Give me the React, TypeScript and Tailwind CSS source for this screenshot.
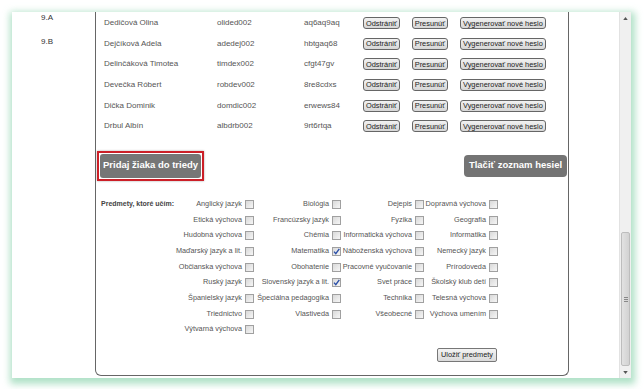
import React from 'react';

type Student = {
  name: string;
  login: string;
  password: string;
};

const students: Student[] = [
  { name: 'Dedičová Olina', login: 'olided002', password: 'aq6aq9aq' },
  { name: 'Dejčíková Adela', login: 'adedej002', password: 'hbtgaq68' },
  { name: 'Delinčáková Timotea', login: 'timdex002', password: 'cfgt47gv' },
  { name: 'Devečka Róbert', login: 'robdev002', password: '8re8cdxs' },
  { name: 'Dička Dominik', login: 'domdic002', password: 'erwews84' },
  { name: 'Drbul Albín', login: 'albdrb002', password: '9rt6rtqa' },
];

// subjects laid out column by column, as in the original form
const subjectColumns: [string, boolean][][] = [
  [
    ['Anglický jazyk', false],
    ['Etická výchova', false],
    ['Hudobná výchova', false],
    ['Maďarský jazyk a lit.', false],
    ['Občianska výchova', false],
    ['Ruský jazyk', false],
    ['Španielsky jazyk', false],
    ['Triednictvo', false],
    ['Výtvarná výchova', false],
  ],
  [
    ['Biológia', false],
    ['Francúzsky jazyk', false],
    ['Chémia', false],
    ['Matematika', true],
    ['Obohatenie', false],
    ['Slovenský jazyk a lit.', true],
    ['Špeciálna pedagogika', false],
    ['Vlastiveda', false],
  ],
  [
    ['Dejepis', false],
    ['Fyzika', false],
    ['Informatická výchova', false],
    ['Náboženská výchova', false],
    ['Pracovné vyučovanie', false],
    ['Svet práce', false],
    ['Technika', false],
    ['Všeobecné', false],
  ],
  [
    ['Dopravná výchova', false],
    ['Geografia', false],
    ['Informatika', false],
    ['Nemecký jazyk', false],
    ['Prírodoveda', false],
    ['Školský klub detí', false],
    ['Telesná výchova', false],
    ['Výchova umením', false],
  ],
];

function SmallButton({ children }: { children: React.ReactNode }) {
  return (
    <span className="inline-flex items-center h-[12px] px-[2px] border border-[#666] rounded-[3px] bg-gradient-to-b from-[#f2f2f2] to-[#d6d6d6] text-[7.4px] leading-none text-[#222] whitespace-nowrap">
      {children}
    </span>
  );
}

function Box({ checked }: { checked: boolean }) {
  return (
    <span className="relative inline-block w-[9px] h-[9px] shrink-0 border border-[#a0a0a0] bg-gradient-to-br from-[#d9d9d9] to-[#f6f6f6]">
      {checked && (
        <svg viewBox="0 0 9 9" className="absolute -left-px -top-px w-[9px] h-[9px]">
          <path d="M2 4.6 L3.8 6.6 L7.3 1.8" fill="none" stroke="#2a4fa8" strokeWidth="1.4" />
        </svg>
      )}
    </span>
  );
}

function Scrollbar() {
  return (
    <div className="w-[12px] shrink-0 flex flex-col bg-[#f0f0f0] border-l border-[#e2e2e2]">
      <div className="h-[12px] flex items-center justify-center">
        <svg viewBox="0 0 6 4" className="w-[5px] h-[3px]">
          <path d="M0 4 L3 0 L6 4 Z" fill="#555" />
        </svg>
      </div>
      <div className="flex-1" />
      <div className="h-[134px] mx-[1px] flex items-center justify-center rounded-[2px] border border-[#bdbdbd] bg-gradient-to-r from-[#e2e2e2] to-[#d2d2d2]">
        <div className="flex flex-col gap-[1px]">
          <span className="block w-[4px] h-px bg-[#888]" />
          <span className="block w-[4px] h-px bg-[#888]" />
          <span className="block w-[4px] h-px bg-[#888]" />
        </div>
      </div>
      <div className="h-[12px] flex items-center justify-center">
        <svg viewBox="0 0 6 4" className="w-[5px] h-[3px]">
          <path d="M0 0 L6 0 L3 4 Z" fill="#555" />
        </svg>
      </div>
    </div>
  );
}

export default function App() {
  return (
    <div className="w-[644px] h-[389px] bg-white overflow-hidden pt-[12px] pl-[12px] font-['Liberation_Sans',Arial,sans-serif]">
      <div className="w-[619px] h-[366px] flex overflow-hidden bg-white shadow-[1px_3px_7px_3px_rgba(150,215,180,0.75)]">
        <div className="flex-1 flex">
          {/* class list */}
          <div className="w-[83px] shrink-0 pl-[29px] text-[8px] leading-[10px] text-[#333]">
            <div className="mt-px">9.A</div>
            <div className="mt-[14px]">9.B</div>
          </div>

          {/* class detail panel */}
          <div className="w-[474px] h-[364px] shrink-0 border-l border-r border-b border-[#666] rounded-b-[6px] text-[#555]">
            <div className="pt-[1px] pl-[8px]">
              {students.map((s) => (
                <div key={s.login} className="h-[20.6px] grid grid-cols-[113px_87px_59px_auto] items-center text-[8px] whitespace-nowrap">
                  <span>{s.name}</span>
                  <span>{s.login}</span>
                  <span>{s.password}</span>
                  <div className="flex gap-[12px]">
                    <SmallButton>Odstrániť</SmallButton>
                    <SmallButton>Presunúť</SmallButton>
                    <SmallButton>Vygenerovať nové heslo</SmallButton>
                  </div>
                </div>
              ))}
            </div>

            <div className="mt-[14px] h-[30px] pl-[1px] pr-[1px] flex items-center justify-between">
              <div className="h-[30px] w-[107px] p-[1px] border-2 border-[#cc1f27] shadow-[0_0_2px_rgba(0,0,0,0.35)]">
                <div className="h-full rounded-[3px] bg-[#767676] flex items-center justify-center text-white font-bold text-[9.5px]">
                  Pridaj žiaka do triedy
                </div>
              </div>
              <div className="h-[22px] w-[103px] rounded-[4px] bg-[#747474] flex items-center justify-center text-white font-bold text-[9.5px]">
                Tlačiť zoznam hesiel
              </div>
            </div>

            <div className="mt-[16px] pl-[5px] w-[402px]">
              <div className="grid grid-cols-[75px_78px_87px_83px_74px] text-[7.3px] text-[#555]">
                <div className="h-[15.7px] flex items-center font-bold text-[7px] text-[#444]">
                  Predmety, ktoré učím:
                </div>
                {subjectColumns.map((col, ci) => (
                  <div key={ci}>
                    {col.map(([label, checked]) => (
                      <div key={label} className="h-[15.7px] flex items-center justify-end gap-[3px] whitespace-nowrap">
                        <span>{label}</span>
                        <Box checked={checked} />
                      </div>
                    ))}
                  </div>
                ))}
              </div>
              <div className="mt-[10px] flex justify-end pr-[1px]">
                <span className="inline-flex items-center h-[14px] px-[3px] border border-[#777] rounded-[2px] bg-gradient-to-b from-[#f4f4f4] to-[#dadada] text-[7.4px] text-[#222]">
                  Uložiť predmety
                </span>
              </div>
            </div>
          </div>
        </div>
        <Scrollbar />
      </div>
    </div>
  );
}
